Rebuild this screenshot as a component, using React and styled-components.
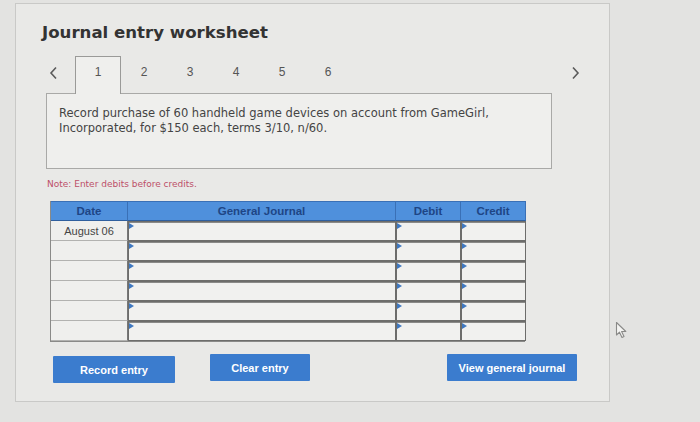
import React from 'react';
import styled, { createGlobalStyle } from 'styled-components';

const GlobalStyle = createGlobalStyle`
  body {
    margin: 0;
    background: #e3e3e1;
    font-family: "DejaVu Sans", Verdana, sans-serif;
  }
`;

const Page = styled.div`
  position: relative;
  width: 700px;
  height: 422px;
  overflow: hidden;
`;

const Panel = styled.div`
  margin: 3px 0 0 15px;
  width: 595px;
  height: 399px;
  box-sizing: border-box;
  border: 1px solid #c9c9c7;
  background: #e9e9e7;
  padding: 18px 0 0 26px;
`;

const Title = styled.h1`
  margin: 0;
  font-family: "DejaVu Sans", Verdana, sans-serif;
  font-weight: bold;
  font-size: 16.6px;
  line-height: 22px;
  color: #333;
`;

const TabRow = styled.div`
  display: flex;
  align-items: stretch;
  margin: 12px 0 0 4px;
  width: 545px;
  height: 37px;
`;

const Arrow = styled.div`
  width: ${p => p.w}px;
  display: flex;
  justify-content: flex-start;
  padding: 10px 0 0 ${p => p.pl}px;
  box-sizing: border-box;
`;

const Spacer = styled.div`
  flex: 1;
`;

const Tab = styled.div`
  width: 46px;
  box-sizing: border-box;
  text-align: center;
  padding-top: 8px;
  font-family: "Liberation Sans", Arial, sans-serif;
  font-size: 12px;
  color: #555;
  border: 1px solid ${p => (p.active ? '#9a9a98' : 'transparent')};
  border-bottom: none;
  background: ${p => (p.active ? '#efefed' : 'transparent')};
  margin-bottom: -1px;
  position: relative;
  z-index: 1;
`;

const Prompt = styled.div`
  margin-left: 4px;
  width: 506px;
  height: 76px;
  box-sizing: border-box;
  border: 1px solid #a9a9a7;
  background: #efefed;
  padding: 12px 12px 0;
  font-size: 11.5px;
  line-height: 15px;
  color: #444;
`;

const Note = styled.div`
  margin: 9px 0 0 5px;
  font-size: 9px;
  line-height: 12px;
  color: #bd5069;
`;

const Table = styled.div`
  margin: 11px 0 0 8px;
  width: 475px;
  display: grid;
  grid-template-columns: 77px 268px 65px 65px;
  grid-auto-rows: 20px;
  border: 1px solid #8a8a88;
  border-top: none;
  box-sizing: border-box;
`;

const Head = styled.div`
  background: #4f90dc;
  color: #1e4585;
  font-family: "Liberation Sans", Arial, sans-serif;
  font-weight: bold;
  font-size: 11.5px;
  display: flex;
  align-items: center;
  justify-content: center;
  border-right: 1px solid #3a70b6;
  border-bottom: 1px solid #2f5f9e;
  border-top: 1px solid #3a70b6;
  &:last-child {
    border-right: none;
  }
`;

const DateCell = styled.div`
  background: #efefed;
  border-bottom: 1px solid #b2b2b0;
  border-right: 1px solid #777;
  font-family: "Liberation Sans", Arial, sans-serif;
  font-size: 11px;
  color: #444;
  display: flex;
  align-items: center;
  justify-content: center;
`;

const InputCell = styled.div`
  position: relative;
  background: #f1f1ef;
  border: 1px solid #6d6d6b;
  box-shadow: inset 0 1px 0 #8a8a88;
  &::before {
    content: '';
    position: absolute;
    left: 0;
    top: 1px;
    border-left: 5px solid #3f78c0;
    border-top: 3px solid transparent;
    border-bottom: 3px solid transparent;
  }
`;

const Buttons = styled.div`
  display: flex;
  align-items: flex-start;
  margin: 12px 0 0 11px;
  width: 524px;
`;

const Button = styled.button`
  width: ${p => p.w}px;
  height: 27px;
  margin-left: ${p => p.ml};
  margin-top: ${p => p.mt}px;
  border: none;
  border-radius: 1px;
  background: #3b7cce;
  color: #fff;
  font-family: "Liberation Sans", Arial, sans-serif;
  font-weight: bold;
  font-size: 11px;
  padding: 0;
`;

const Cursor = styled.svg`
  position: absolute;
  left: 615px;
  top: 321px;
`;

const rows = ['August 06', '', '', '', '', ''];

const Chevron = ({ dir }) => (
  <svg width="9" height="14" viewBox="0 0 9 14">
    <path
      d={dir === 'left' ? 'M7 1.5 L2 7 L7 12.5' : 'M2 1.5 L7 7 L2 12.5'}
      fill="none"
      stroke="#5a5a5a"
      strokeWidth="1.6"
    />
  </svg>
);

export default function App() {
  return (
    <Page>
      <GlobalStyle />
      <Panel>
        <Title>Journal entry worksheet</Title>
        <TabRow>
          <Arrow w={29} pl={3}><Chevron dir="left" /></Arrow>
          {[1, 2, 3, 4, 5, 6].map(n => (
            <Tab key={n} active={n === 1}>{n}</Tab>
          ))}
          <Spacer />
          <Arrow w={20} pl={0}><Chevron dir="right" /></Arrow>
        </TabRow>
        <Prompt>
          Record purchase of 60 handheld game devices on account from GameGirl,
          <br />
          Incorporated, for $150 each, terms 3/10, n/60.
        </Prompt>
        <Note>Note: Enter debits before credits.</Note>
        <Table>
          <Head>Date</Head>
          <Head>General Journal</Head>
          <Head>Debit</Head>
          <Head>Credit</Head>
          {rows.map((d, i) => (
            <React.Fragment key={i}>
              <DateCell>{d}</DateCell>
              <InputCell />
              <InputCell />
              <InputCell />
            </React.Fragment>
          ))}
        </Table>
        <Buttons>
          <Button w={122} mt={2}>Record entry</Button>
          <Button w={100} ml="35px">Clear entry</Button>
          <Button w={130} ml="auto">View general journal</Button>
        </Buttons>
      </Panel>
      <Cursor width="14" height="18" viewBox="0 0 14 18">
        <path d="M1.5 1.5 L1.5 14 L4.5 11.2 L7 16.5 L9 15.6 L6.6 10.5 L10.8 10.5 Z" fill="#f4f4f2" stroke="#8a8a88" strokeWidth="1.1" strokeLinejoin="round" />
      </Cursor>
    </Page>
  );
}
